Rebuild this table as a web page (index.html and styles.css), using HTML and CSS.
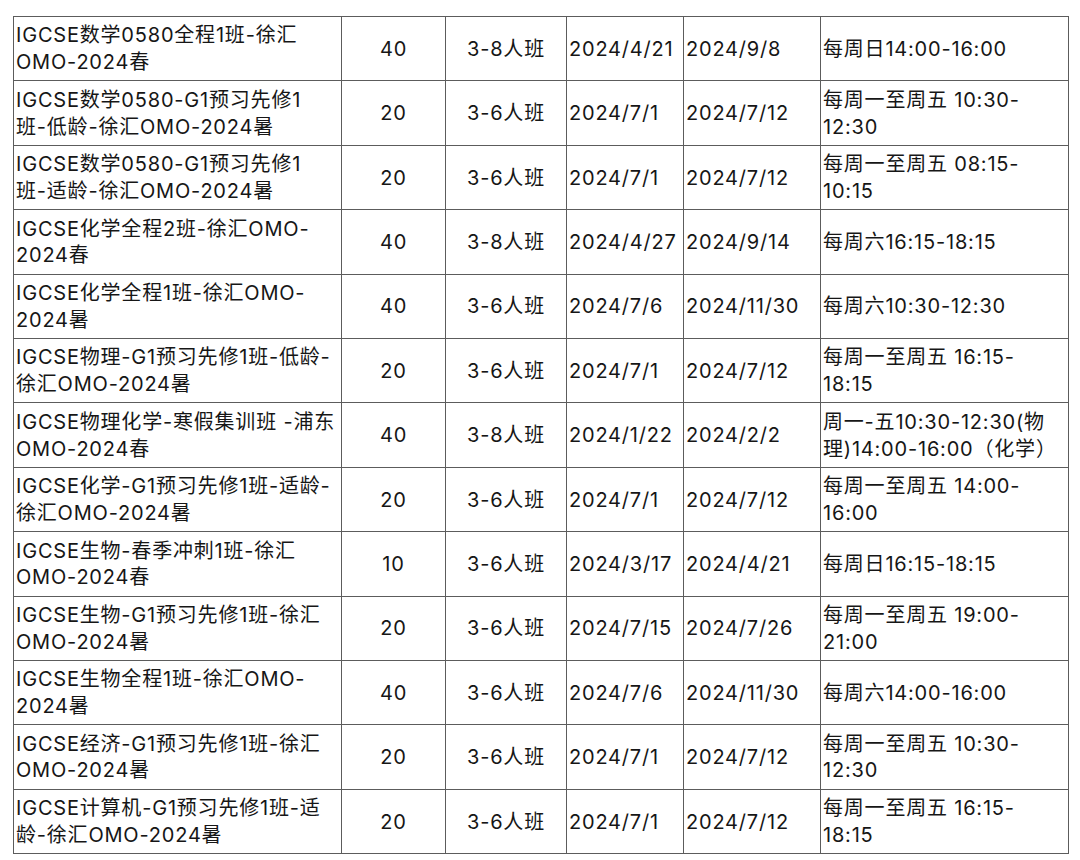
FILE: index.html
```html
<!DOCTYPE html>
<html lang="zh-CN">
<head>
<meta charset="utf-8">
<link rel="stylesheet" href="styles.css">
</head>
<body>
<table class="schedule">
  <colgroup>
    <col class="c-name"><col class="c-num"><col class="c-size"><col class="c-start"><col class="c-end"><col class="c-time">
  </colgroup>
  <tbody>
    <tr><td>IGCSE数学0580全程1班-徐汇<br>OMO-2024春</td><td class="ctr">40</td><td class="ctr">3-8人班</td><td>2024/4/21</td><td>2024/9/8</td><td>每周日14:00-16:00</td></tr>
    <tr><td>IGCSE数学0580-G1预习先修1<br>班-低龄-徐汇OMO-2024暑</td><td class="ctr">20</td><td class="ctr">3-6人班</td><td>2024/7/1</td><td>2024/7/12</td><td>每周一至周五 10:30-<br>12:30</td></tr>
    <tr><td>IGCSE数学0580-G1预习先修1<br>班-适龄-徐汇OMO-2024暑</td><td class="ctr">20</td><td class="ctr">3-6人班</td><td>2024/7/1</td><td>2024/7/12</td><td>每周一至周五 08:15-<br>10:15</td></tr>
    <tr><td>IGCSE化学全程2班-徐汇OMO-<br>2024春</td><td class="ctr">40</td><td class="ctr">3-8人班</td><td>2024/4/27</td><td>2024/9/14</td><td>每周六16:15-18:15</td></tr>
    <tr><td>IGCSE化学全程1班-徐汇OMO-<br>2024暑</td><td class="ctr">40</td><td class="ctr">3-6人班</td><td>2024/7/6</td><td>2024/11/30</td><td>每周六10:30-12:30</td></tr>
    <tr><td>IGCSE物理-G1预习先修1班-低龄-<br>徐汇OMO-2024暑</td><td class="ctr">20</td><td class="ctr">3-6人班</td><td>2024/7/1</td><td>2024/7/12</td><td>每周一至周五 16:15-<br>18:15</td></tr>
    <tr><td>IGCSE物理化学-寒假集训班 -浦东<br>OMO-2024春</td><td class="ctr">40</td><td class="ctr">3-8人班</td><td>2024/1/22</td><td>2024/2/2</td><td>周一-五10:30-12:30(物<br>理)14:00-16:00（化学）</td></tr>
    <tr><td>IGCSE化学-G1预习先修1班-适龄-<br>徐汇OMO-2024暑</td><td class="ctr">20</td><td class="ctr">3-6人班</td><td>2024/7/1</td><td>2024/7/12</td><td>每周一至周五 14:00-<br>16:00</td></tr>
    <tr><td>IGCSE生物-春季冲刺1班-徐汇<br>OMO-2024春</td><td class="ctr">10</td><td class="ctr">3-6人班</td><td>2024/3/17</td><td>2024/4/21</td><td>每周日16:15-18:15</td></tr>
    <tr><td>IGCSE生物-G1预习先修1班-徐汇<br>OMO-2024暑</td><td class="ctr">20</td><td class="ctr">3-6人班</td><td>2024/7/15</td><td>2024/7/26</td><td>每周一至周五 19:00-<br>21:00</td></tr>
    <tr><td>IGCSE生物全程1班-徐汇OMO-<br>2024暑</td><td class="ctr">40</td><td class="ctr">3-6人班</td><td>2024/7/6</td><td>2024/11/30</td><td>每周六14:00-16:00</td></tr>
    <tr><td>IGCSE经济-G1预习先修1班-徐汇<br>OMO-2024暑</td><td class="ctr">20</td><td class="ctr">3-6人班</td><td>2024/7/1</td><td>2024/7/12</td><td>每周一至周五 10:30-<br>12:30</td></tr>
    <tr><td>IGCSE计算机-G1预习先修1班-适<br>龄-徐汇OMO-2024暑</td><td class="ctr">20</td><td class="ctr">3-6人班</td><td>2024/7/1</td><td>2024/7/12</td><td>每周一至周五 16:15-<br>18:15</td></tr>
  </tbody>
</table>
</body>
</html>
```
FILE: styles.css
```css
html, body {
  margin: 0;
  background: #ffffff;
}
body {
  padding: 16px 0 0 13px;
  font-family: "Inter", "Noto Sans CJK SC", sans-serif;
  font-size: 20px;
  color: #161616;
}
.schedule {
  border-collapse: collapse;
  table-layout: fixed;
  width: 1055px;
}
.c-name { width: 328px; }
.c-num { width: 104px; }
.c-size { width: 121px; }
.c-start { width: 117px; }
.c-end { width: 137px; }
.c-time { width: 248px; }
.schedule td {
  border: 1px solid #5c5c5c;
  height: 62.4px;
  padding: 1px 2px 0;
  line-height: 26.7px;
  letter-spacing: 0.8px;
  vertical-align: middle;
  white-space: nowrap;
  overflow: hidden;
}
.schedule td.ctr {
  text-align: center;
}
```
